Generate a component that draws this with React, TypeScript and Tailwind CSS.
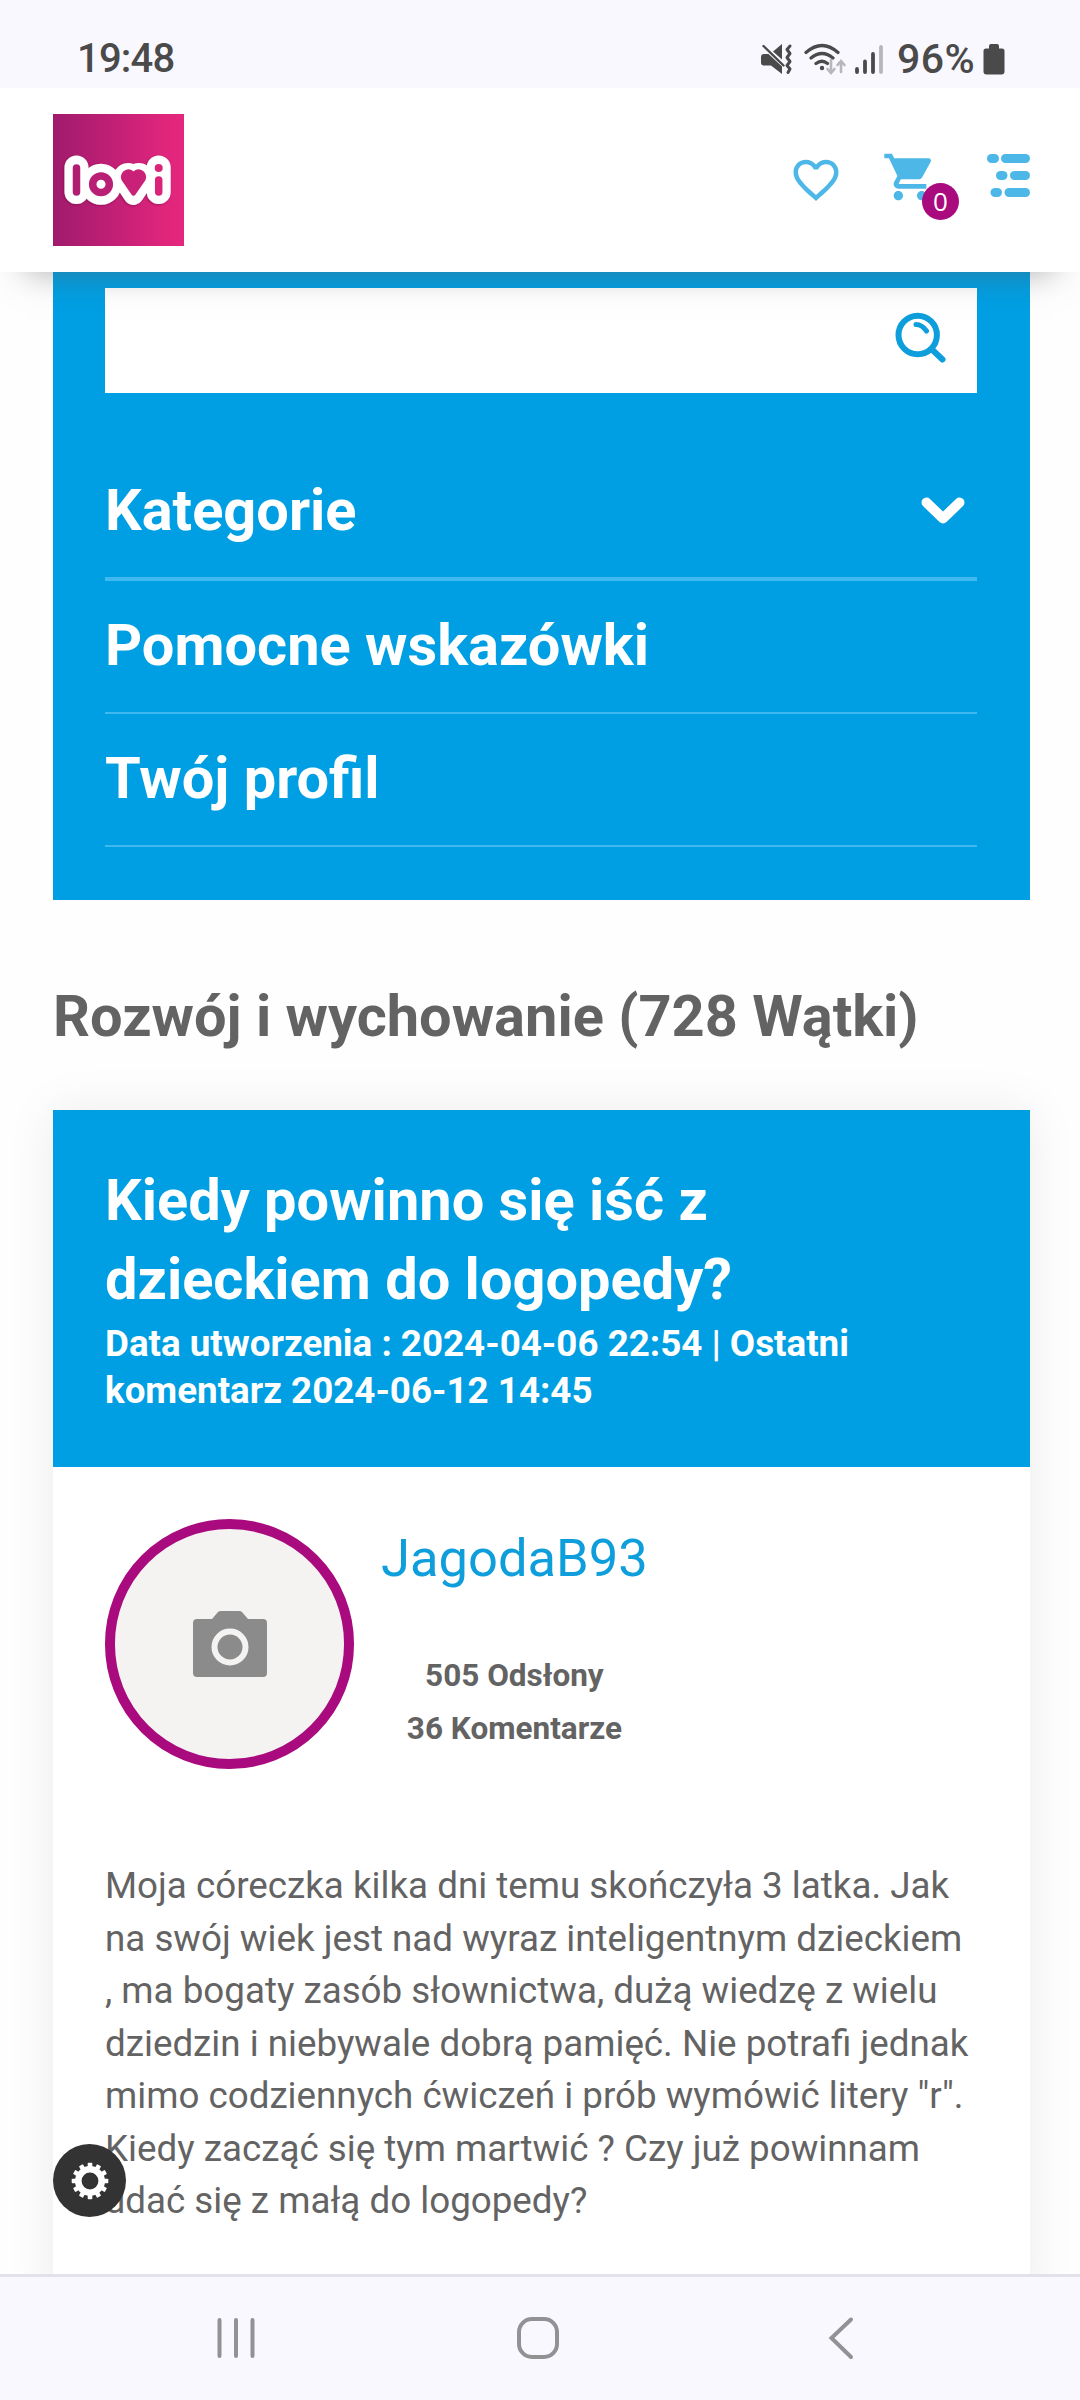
import type { ReactNode } from 'react';
import { MdFavoriteBorder, MdShoppingCart } from 'react-icons/md';

const gearTeeth = Array.from({ length: 12 }, (_, i) => i * 30);

function StatusBar() {
  return (
    <div className="h-[88px] bg-[#f9f8fe] flex items-start justify-between pl-[77px] pr-[75px] text-[#4a4a4a]">
      <span className="mt-[35px] text-[40px] leading-[48px] font-medium tracking-[-0.800px]">19:48</span>
      <div className="flex items-start">
        <svg className="mt-[42px] w-[122px] h-[36px] mr-[14px]" viewBox="761 42 122 36" fill="none">
          <path d="M761 57q0-3 3-3h4.500L782 66.500V74l-11-8.500h-7q-3 0-3-3zM773 51.500l9-7.500v15.500z" fill="currentColor" />
          <path d="M763.500 46l20 19.500" stroke="currentColor" strokeWidth="2.400" strokeLinecap="round" />
          <path d="M790 46l-3 3.500 3 4-3 4 3 4-3 4 3 3.500-2 3.500" stroke="currentColor" strokeWidth="3" strokeLinecap="round" strokeLinejoin="round" />
          <path d="M806 52.500q16-14 32 0M811 58q11-9 22 0M816 63.500q6-4.500 11.500 0" stroke="currentColor" strokeWidth="3.200" strokeLinecap="round" />
          <circle cx="822" cy="68" r="2.200" fill="currentColor" />
          <path d="M831 60v13m-3.500-4l3.500 4 3.500-4M841 72V61m-3.500 4l3.500-4 3.500 4" stroke="#b7b6bb" strokeWidth="2.600" strokeLinecap="round" />
          <path d="M857 69v3M865 61.500V72M873 54v18" stroke="currentColor" strokeWidth="3.800" strokeLinecap="round" />
          <path d="M881 47v25" stroke="#b7b6bb" strokeWidth="3.800" strokeLinecap="round" />
        </svg>
        <span className="mt-[35px] text-[41px] leading-[48px] font-medium w-[79px] mr-[7px] tracking-[0.500px]">96%</span>
        <svg className="mt-[44px] w-[22px] h-[31px]" viewBox="0 0 22 31" fill="currentColor">
          <path d="M6 2q0-2 2-2h6q2 0 2 2v2.500h3q2.500 0 2.500 2.500v20.500q0 3-3 3h-15q-3 0-3-3V7q0-2.500 2.500-2.500h3z" />
        </svg>
      </div>
    </div>
  );
}

function Logo() {
  return (
    <svg className="w-[131px] h-[132px]" viewBox="53 114 131 132" fill="none" strokeLinecap="round" strokeLinejoin="round">
      <defs>
        <linearGradient id="logo-bg" x1="53" y1="0" x2="184" y2="0" gradientUnits="userSpaceOnUse">
          <stop offset="0" stopColor="#a01b6c" />
          <stop offset="0.500" stopColor="#c42076" />
          <stop offset="0.850" stopColor="#e0257c" />
          <stop offset="1" stopColor="#e3277d" />
        </linearGradient>
        <filter id="logo-shadow" filterUnits="userSpaceOnUse" x="53" y="114" width="131" height="132">
          <feDropShadow dx="-0.800" dy="0.800" stdDeviation="0.900" floodColor="#7b0a50" floodOpacity="0.700" />
        </filter>
      </defs>
      <rect x="53" y="114" width="131" height="132" fill="url(#logo-bg)" />
      <g stroke="#fff" filter="url(#logo-shadow)">
        <path d="M76.500 167.500V192M158.700 167.500V192" strokeWidth="24" />
        <circle cx="101" cy="184.300" r="10" strokeWidth="21" fill="#fff" />
        <path d="M133.500 195l-10-15a4.500 4.500 0 0 1 10-3.500 4.500 4.500 0 0 1 10 3.500z" strokeWidth="20" fill="#fff" />
      </g>
      <path d="M76.500 168V192" strokeWidth="7.500" stroke="#b01d71" />
      <circle cx="101" cy="184.300" r="8.300" strokeWidth="7.500" stroke="#b91f74" />
      <path d="M133.500 193.500l-10-14.500a5 5 0 0 1 10-4 5 5 0 0 1 10 4z" strokeWidth="4.500" stroke="#c92177" fill="#c92177" />
      <circle cx="158.700" cy="168" r="4" fill="#d92478" />
      <path d="M158.700 180V192" strokeWidth="7.500" stroke="#d92478" />
    </svg>
  );
}

function Header() {
  return (
    <header className="relative z-10 h-[184px] bg-white flex items-start justify-between pt-[26px] pl-[53px] pr-[50px] shadow-[0_26px_32px_-26px_rgba(90,85,85,0.5)]">
      <Logo />
      <div className="flex items-start text-[#4db8e8]">
        <MdFavoriteBorder className="w-[54px] h-[54px] mt-[39px]" />
        <div className="relative ml-[39px] mt-[35px]">
          <MdShoppingCart className="w-[56px] h-[56px]" />
          <span className="absolute left-[40px] top-[34px] w-[37px] h-[37px] rounded-full bg-[#a90a7d] text-white text-[26px] leading-[36px] text-center font-['Open_Sans',sans-serif]">0</span>
        </div>
        <svg className="ml-[49px] mt-[40px] w-[43px] h-[43px]" viewBox="987 154 43 43" fill="currentColor">
          <rect x="987" y="154" width="12" height="9" rx="4.500" />
          <rect x="1001" y="154" width="29" height="9" rx="4.500" />
          <rect x="996" y="171" width="11.500" height="9" rx="4.500" />
          <rect x="1010" y="171" width="20" height="9" rx="4.500" />
          <rect x="990.500" y="188" width="11.500" height="9" rx="4.500" />
          <rect x="1004.500" y="188" width="25.500" height="9" rx="4.500" />
        </svg>
      </div>
    </header>
  );
}

function MenuItem({ className, children }: { className: string; children: ReactNode }) {
  return (
    <div className={`flex items-center justify-between border-[#40b8f0] text-white text-[57.750px] font-bold ${className}`}>
      {children}
    </div>
  );
}

function SidePanel() {
  return (
    <nav className="mx-[53px] w-[977px] h-[628px] bg-[#009fe3] pl-[52px] pr-[53px] pt-[16px]">
      <div className="h-[105px] bg-white flex justify-end items-start pt-[24px] pr-[31px]">
        <svg className="w-[51px] h-[51px]" viewBox="895 312 51 51" fill="none" stroke="#0d9edb" strokeLinecap="round">
          <circle cx="917.700" cy="335" r="19.200" strokeWidth="6" />
          <path d="M932 349.500l10.500 10" strokeWidth="6" />
          <path d="M916 324.500q6 0 10.500 6.500" strokeWidth="5" />
        </svg>
      </div>
      <MenuItem className="mt-[49px] pt-[2px] h-[139px] border-b-4">
        Kategorie
        <svg className="w-[44px] h-[28px] mr-[12px]" viewBox="0 0 44 28" fill="none" stroke="#fff" strokeWidth="10" strokeLinecap="round" strokeLinejoin="round">
          <path d="M5.500 5.500L22 21.500 38.500 5.500" />
        </svg>
      </MenuItem>
      <MenuItem className="h-[133px] pb-[2px] border-b-2">Pomocne wskazówki</MenuItem>
      <MenuItem className="h-[133px] pb-[2px] border-b-2">Twój profil</MenuItem>
    </nav>
  );
}

function ThreadCard() {
  return (
    <article className="mx-[53px] w-[977px] mt-[52px] h-[1200px] bg-white shadow-[0_0_46px_rgba(0,0,0,0.08)]">
      <div className="h-[357px] bg-[#009fe3] text-white font-bold px-[52px] pt-[51px]">
        <h2 className="text-[57.750px] leading-[79px]">
          Kiedy powinno się iść z<br />dzieckiem do logopedy?
        </h2>
        <p className="mt-px text-[36.750px] leading-[47px]">
          Data utworzenia : 2024-04-06 22:54 | Ostatni<br />komentarz 2024-06-12 14:45
        </p>
      </div>
      <div className="flex pl-[52px] pt-[52px]">
        <div className="w-[249px] h-[250px] rounded-full border-[10px] border-[#a90a7d] bg-[#f5f3f2] flex items-center justify-center">
          <svg className="w-[76px] h-[68px]" viewBox="192 1610 76 68">
            <path d="M197 1619h15l6-7q1-1 3-1h18q2 0 3 1l6 7h15q4 0 4 4v50q0 4-4 4h-66q-4 0-4-4v-50q0-4 4-4z" fill="#8b8b8b" />
            <circle cx="230" cy="1647" r="15.500" fill="none" stroke="#f5f3f2" strokeWidth="6" />
          </svg>
        </div>
        <div className="ml-[27px] pt-px text-[#646363]">
          <div className="text-[52.500px] leading-[76px] text-[#0d9edb]">JagodaB93</div>
          <div className="mt-[53px] text-center text-[31.500px] leading-[53px] font-bold">
            <div>505 Odsłony</div>
            <div>36 Komentarze</div>
          </div>
        </div>
      </div>
      <p className="ml-[52px] mt-[91px] text-[36.750px] leading-[52.500px] text-[#646363] whitespace-nowrap">
        Moja córeczka kilka dni temu skończyła 3 latka. Jak<br />
        na swój wiek jest nad wyraz inteligentnym dzieckiem<br />
        , ma bogaty zasób słownictwa, dużą wiedzę z wielu<br />
        dziedzin i niebywale dobrą pamięć. Nie potrafi jednak<br />
        mimo codziennych ćwiczeń i prób wymówić litery "r".<br />
        Kiedy zacząć się tym martwić ? Czy już powinnam<br />
        udać się z małą do logopedy?
      </p>
    </article>
  );
}

function SettingsButton() {
  return (
    <button className="absolute left-[53px] bottom-[57px] w-[73px] h-[73px] rounded-full bg-[#333] flex items-center justify-center">
      <svg className="w-[38px] h-[38px]" viewBox="-19 -19 38 38">
        <circle r="11.700" fill="none" stroke="#fff" strokeWidth="6.600" />
        {gearTeeth.map((deg) => (
          <rect key={deg} x="-2.300" y="-18.300" width="4.600" height="5" rx="0.800" fill="#fff" transform={`rotate(${deg})`} />
        ))}
      </svg>
    </button>
  );
}

function NavBar() {
  return (
    <footer className="h-[126px] border-t-[3px] border-[#e2e2ea] bg-[#f9f8fe] flex items-start justify-between pl-[217px] pr-[226px] pt-[38px] text-[#929295]">
      <svg className="w-[38px] h-[46px]" viewBox="0 0 38 46" stroke="currentColor" strokeWidth="4" strokeLinecap="round">
        <path d="M2.500 5v36M19 5v36M35.500 5v36" />
      </svg>
      <svg className="w-[46px] h-[46px] mr-[7px]" viewBox="0 0 46 46" fill="none" stroke="currentColor" strokeWidth="4">
        <rect x="4" y="4" width="38" height="38" rx="13" />
      </svg>
      <svg className="w-[26px] h-[46px]" viewBox="0 0 26 46" fill="none" stroke="currentColor" strokeWidth="4" strokeLinecap="round">
        <path d="M23 4.500L3.500 23 23 42" />
      </svg>
    </footer>
  );
}

export default function App() {
  return (
    <div className="w-[1080px] h-[2400px] overflow-hidden bg-[#fefefe] flex flex-col font-['Roboto',sans-serif]">
      <StatusBar />
      <Header />
      <main className="relative h-[2002px] overflow-hidden">
        <SidePanel />
        <h1 className="ml-[53px] mt-[74px] text-[57.750px] leading-[84px] font-bold text-[#646363]">
          Rozwój i wychowanie (728 Wątki)
        </h1>
        <ThreadCard />
        <SettingsButton />
      </main>
      <NavBar />
    </div>
  );
}
